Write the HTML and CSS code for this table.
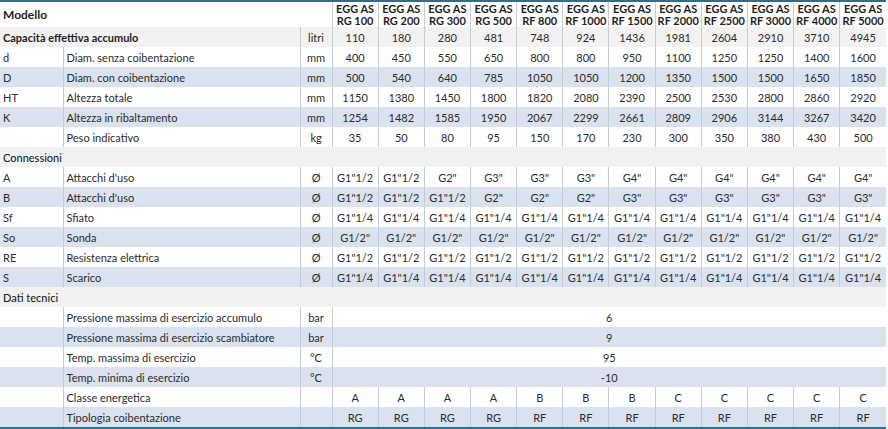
FILE: index.html
```html
<!DOCTYPE html>
<html lang="it">
<head>
<meta charset="utf-8">
<title>EGG AS</title>
<link rel="stylesheet" href="styles.css">
</head>
<body>
<table class="spec">
<colgroup>
<col class="c-code"><col class="c-desc"><col class="c-unit">
<col class="c-m"><col class="c-m"><col class="c-m"><col class="c-m"><col class="c-m"><col class="c-m">
<col class="c-m"><col class="c-m"><col class="c-m"><col class="c-m"><col class="c-m"><col class="c-m">
</colgroup>
<thead>
<tr class="head">
<th colspan="3" class="title">Modello</th>
<th>EGG AS<br>RG 100</th><th>EGG AS<br>RG 200</th><th>EGG AS<br>RG 300</th><th>EGG AS<br>RG 500</th>
<th>EGG AS<br>RF 800</th><th>EGG AS<br>RF 1000</th><th>EGG AS<br>RF 1500</th><th>EGG AS<br>RF 2000</th>
<th>EGG AS<br>RF 2500</th><th>EGG AS<br>RF 3000</th><th>EGG AS<br>RF 4000</th><th>EGG AS<br>RF 5000</th>
</tr>
</thead>
<tbody>
<tr class="gray">
<td colspan="2" class="lbl strong">Capacità effettiva accumulo</td><td class="unit">litri</td>
<td>110</td><td>180</td><td>280</td><td>481</td><td>748</td><td>924</td><td>1436</td><td>1981</td><td>2604</td><td>2910</td><td>3710</td><td>4945</td>
</tr>
<tr>
<td class="lbl">d</td><td class="lbl">Diam. senza coibentazione</td><td class="unit">mm</td>
<td>400</td><td>450</td><td>550</td><td>650</td><td>800</td><td>800</td><td>950</td><td>1100</td><td>1250</td><td>1250</td><td>1400</td><td>1600</td>
</tr>
<tr class="blue">
<td class="lbl">D</td><td class="lbl">Diam. con coibentazione</td><td class="unit">mm</td>
<td>500</td><td>540</td><td>640</td><td>785</td><td>1050</td><td>1050</td><td>1200</td><td>1350</td><td>1500</td><td>1500</td><td>1650</td><td>1850</td>
</tr>
<tr>
<td class="lbl">HT</td><td class="lbl">Altezza totale</td><td class="unit">mm</td>
<td>1150</td><td>1380</td><td>1450</td><td>1800</td><td>1820</td><td>2080</td><td>2390</td><td>2500</td><td>2530</td><td>2800</td><td>2860</td><td>2920</td>
</tr>
<tr class="blue">
<td class="lbl">K</td><td class="lbl">Altezza in ribaltamento</td><td class="unit">mm</td>
<td>1254</td><td>1482</td><td>1585</td><td>1950</td><td>2067</td><td>2299</td><td>2661</td><td>2809</td><td>2906</td><td>3144</td><td>3267</td><td>3420</td>
</tr>
<tr>
<td class="lbl"></td><td class="lbl">Peso indicativo</td><td class="unit">kg</td>
<td>35</td><td>50</td><td>80</td><td>95</td><td>150</td><td>170</td><td>230</td><td>300</td><td>350</td><td>380</td><td>430</td><td>500</td>
</tr>
<tr class="gray section">
<td colspan="15" class="lbl sect">Connessioni</td>
</tr>
<tr>
<td class="lbl">A</td><td class="lbl">Attacchi d'uso</td><td class="unit">Ø</td>
<td>G1"1/2</td><td>G1"1/2</td><td>G2"</td><td>G3"</td><td>G3"</td><td>G3"</td><td>G4"</td><td>G4"</td><td>G4"</td><td>G4"</td><td>G4"</td><td>G4"</td>
</tr>
<tr class="blue">
<td class="lbl">B</td><td class="lbl">Attacchi d'uso</td><td class="unit">Ø</td>
<td>G1"1/2</td><td>G1"1/2</td><td>G1"1/2</td><td>G2"</td><td>G2"</td><td>G2"</td><td>G3"</td><td>G3"</td><td>G3"</td><td>G3"</td><td>G3"</td><td>G3"</td>
</tr>
<tr>
<td class="lbl">Sf</td><td class="lbl">Sfiato</td><td class="unit">Ø</td>
<td>G1"1/4</td><td>G1"1/4</td><td>G1"1/4</td><td>G1"1/4</td><td>G1"1/4</td><td>G1"1/4</td><td>G1"1/4</td><td>G1"1/4</td><td>G1"1/4</td><td>G1"1/4</td><td>G1"1/4</td><td>G1"1/4</td>
</tr>
<tr class="blue">
<td class="lbl">So</td><td class="lbl">Sonda</td><td class="unit">Ø</td>
<td>G1/2"</td><td>G1/2"</td><td>G1/2"</td><td>G1/2"</td><td>G1/2"</td><td>G1/2"</td><td>G1/2"</td><td>G1/2"</td><td>G1/2"</td><td>G1/2"</td><td>G1/2"</td><td>G1/2"</td>
</tr>
<tr>
<td class="lbl">RE</td><td class="lbl">Resistenza elettrica</td><td class="unit">Ø</td>
<td>G1"1/2</td><td>G1"1/2</td><td>G1"1/2</td><td>G1"1/2</td><td>G1"1/2</td><td>G1"1/2</td><td>G1"1/2</td><td>G1"1/2</td><td>G1"1/2</td><td>G1"1/2</td><td>G1"1/2</td><td>G1"1/2</td>
</tr>
<tr class="blue">
<td class="lbl">S</td><td class="lbl">Scarico</td><td class="unit">Ø</td>
<td>G1"1/4</td><td>G1"1/4</td><td>G1"1/4</td><td>G1"1/4</td><td>G1"1/4</td><td>G1"1/4</td><td>G1"1/4</td><td>G1"1/4</td><td>G1"1/4</td><td>G1"1/4</td><td>G1"1/4</td><td>G1"1/4</td>
</tr>
<tr class="gray section">
<td colspan="15" class="lbl sect">Dati tecnici</td>
</tr>
<tr>
<td class="lbl"></td><td class="lbl">Pressione massima di esercizio accumulo</td><td class="unit">bar</td>
<td colspan="12">6</td>
</tr>
<tr class="blue">
<td class="lbl"></td><td class="lbl">Pressione massima di esercizio scambiatore</td><td class="unit">bar</td>
<td colspan="12">9</td>
</tr>
<tr>
<td class="lbl"></td><td class="lbl">Temp. massima di esercizio</td><td class="unit">°C</td>
<td colspan="12">95</td>
</tr>
<tr class="blue">
<td class="lbl"></td><td class="lbl">Temp. minima di esercizio</td><td class="unit">°C</td>
<td colspan="12">-10</td>
</tr>
<tr>
<td class="lbl"></td><td class="lbl">Classe energetica</td><td class="unit"></td>
<td>A</td><td>A</td><td>A</td><td>A</td><td>B</td><td>B</td><td>B</td><td>C</td><td>C</td><td>C</td><td>C</td><td>C</td>
</tr>
<tr class="blue">
<td class="lbl"></td><td class="lbl">Tipologia coibentazione</td><td class="unit"></td>
<td>RG</td><td>RG</td><td>RG</td><td>RG</td><td>RF</td><td>RF</td><td>RF</td><td>RF</td><td>RF</td><td>RF</td><td>RF</td><td>RF</td>
</tr>
</tbody>
</table>
</body>
</html>
```

FILE: styles.css
```css
html, body {
  margin: 0;
  padding: 0;
  background: #ffffff;
}

body {
  font-family: Lato, "Liberation Sans", sans-serif;
  font-size: 11px;
  color: #2b2b2b;
}

.spec {
  width: 886px;
  border-collapse: collapse;
  table-layout: fixed;
  border-top: 2px solid #2d6d8e;
  border-bottom: 3px solid #2d6d8e;
}

.c-code { width: 63px; }
.c-desc { width: 237px; }
.c-unit { width: 32px; }
.c-m { width: 46.17px; }

.spec th,
.spec td {
  padding: 0;
  height: 20px;
  text-align: center;
  vertical-align: middle;
  white-space: nowrap;
  overflow: hidden;
  border-left: 1px solid #c3cbd5;
}

.spec tr > :first-child {
  border-left: none;
}

.head th {
  height: 24px;
  font-weight: 700;
  line-height: 12px;
  color: #1e1e1e;
  padding-top: 1px;
}

.head th.title {
  text-align: left;
  padding-left: 3px;
  font-size: 12px;
}

.spec td.lbl {
  text-align: left;
  padding-left: 3px;
}

.spec td.strong {
  font-weight: 700;
  color: #1e1e1e;
}

.spec td.sect {
  font-weight: 500;
  color: #1e1e1e;
}

.gray td { background: #f2f2f2; }
.blue td { background: #d9e2ee; }
```
